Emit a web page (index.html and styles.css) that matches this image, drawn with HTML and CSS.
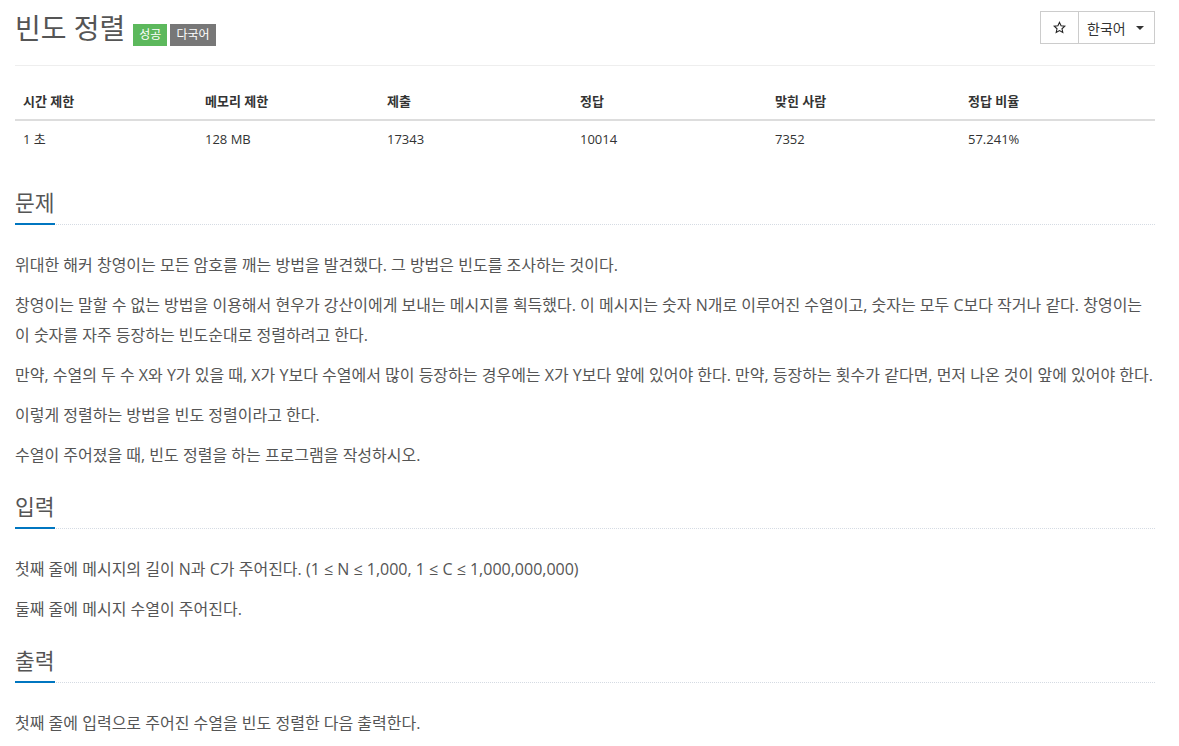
FILE: index.html
```html
<!DOCTYPE html>
<html lang="ko">
<head>
<meta charset="utf-8">
<title>빈도 정렬</title>
<link rel="stylesheet" href="styles.css">
</head>
<body>
<div class="container">
  <div class="page-header">
    <div class="title-wrap">
      <h1 class="title">빈도 정렬</h1>
      <span class="label label-ac">성공</span>
      <span class="label label-lang">다국어</span>
    </div>
    <div class="btn-group">
      <button class="btn btn-star" type="button">
        <svg width="13" height="13" viewBox="0 0 24 24" aria-hidden="true"><path d="M12 2.5l2.9 6.4 6.9.7-5.2 4.7 1.5 6.9L12 17.6l-6.1 3.6 1.5-6.9L2.2 9.6l6.9-.7z" fill="none" stroke="#222" stroke-width="2" stroke-linejoin="miter"/></svg>
      </button>
      <button class="btn btn-lang" type="button">한국어 <span class="caret"></span></button>
    </div>
  </div>

  <table class="info-table">
    <colgroup>
      <col class="c1"><col class="c2"><col class="c3"><col class="c4"><col class="c5"><col class="c6">
    </colgroup>
    <thead>
      <tr><th>시간 제한</th><th>메모리 제한</th><th>제출</th><th>정답</th><th>맞힌 사람</th><th>정답 비율</th></tr>
    </thead>
    <tbody>
      <tr><td>1 초</td><td>128 MB</td><td>17343</td><td>10014</td><td>7352</td><td>57.241%</td></tr>
    </tbody>
  </table>

  <section class="section first">
    <div class="headline"><h2>문제</h2></div>
    <div class="problem-text">
      <p>위대한 해커 창영이는 모든 암호를 깨는 방법을 발견했다. 그 방법은 빈도를 조사하는 것이다.</p>
      <p>창영이는 말할 수 없는 방법을 이용해서 현우가 강산이에게 보내는 메시지를 획득했다. 이 메시지는 숫자 N개로 이루어진 수열이고, 숫자는 모두 C보다 작거나 같다. 창영이는 이 숫자를 자주 등장하는 빈도순대로 정렬하려고 한다.</p>
      <p>만약, 수열의 두 수 X와 Y가 있을 때, X가 Y보다 수열에서 많이 등장하는 경우에는 X가 Y보다 앞에 있어야 한다. 만약, 등장하는 횟수가 같다면, 먼저 나온 것이 앞에 있어야 한다.</p>
      <p>이렇게 정렬하는 방법을 빈도 정렬이라고 한다.</p>
      <p>수열이 주어졌을 때, 빈도 정렬을 하는 프로그램을 작성하시오.</p>
    </div>
  </section>

  <section class="section">
    <div class="headline"><h2>입력</h2></div>
    <div class="problem-text">
      <p>첫째 줄에 메시지의 길이 N과 C가 주어진다. (1 ≤ N ≤ 1,000, 1 ≤ C ≤ 1,000,000,000)</p>
      <p>둘째 줄에 메시지 수열이 주어진다.</p>
    </div>
  </section>

  <section class="section">
    <div class="headline"><h2>출력</h2></div>
    <div class="problem-text">
      <p>첫째 줄에 입력으로 주어진 수열을 빈도 정렬한 다음 출력한다.</p>
    </div>
  </section>
</div>
</body>
</html>
```

FILE: styles.css
```css
html, body {
  margin: 0;
  padding: 0;
  background: #fff;
}
body {
  font-family: "Open Sans", "Noto Sans CJK KR", sans-serif;
  color: #333;
  font-size: 13px;
}
.container {
  width: 1140px;
  margin-left: 15px;
}

/* header */
.page-header {
  display: flex;
  justify-content: space-between;
  align-items: flex-start;
  padding-top: 10px;
  padding-bottom: 19px;
  border-bottom: 1px solid #eee;
}
.title-wrap {
  display: flex;
  align-items: baseline;
}
.title {
  margin: 0;
  font-size: 28px;
  line-height: 36px;
  font-weight: normal;
  color: #555;
}
.label {
  display: inline-block;
  font-size: 12px;
  line-height: 12px;
  padding: 5px 6px 5px;
  color: #fff;
  border-radius: 0;
}
.label-ac {
  background: #5cb85c;
  margin-left: 8px;
}
.label-lang {
  background: #777;
  margin-left: 3px;
}
.btn-group {
  display: flex;
  margin-top: 1px;
}
.btn {
  font-family: inherit;
  background: #fff;
  border: 1px solid #ccc;
  height: 33px;
  margin: 0;
  padding: 0;
  color: #333;
  display: flex;
  align-items: center;
  cursor: pointer;
}
.btn-star {
  width: 39px;
  justify-content: center;
}
.btn-lang {
  width: 76px;
  border-left: none;
  font-size: 14px;
  padding-left: 8px;
}
.caret {
  display: inline-block;
  width: 0;
  height: 0;
  margin-left: 10px;
  border-top: 4px solid #333;
  border-left: 4px solid transparent;
  border-right: 4px solid transparent;
}

/* info table */
.info-table {
  width: 100%;
  border-collapse: collapse;
  margin-top: 17px;
  margin-bottom: 31px;
  table-layout: fixed;
}
.c1 { width: 182px; }
.c2 { width: 182px; }
.c3 { width: 193px; }
.c4 { width: 195px; }
.c5 { width: 193px; }
.c6 { width: 195px; }
.info-table th,
.info-table td {
  text-align: left;
  padding: 8px;
  line-height: 20px;
  color: #333;
}
.info-table th {
  font-size: 13px;
  font-weight: bold;
  border-bottom: 2px solid #ddd;
}
.info-table td {
  font-size: 13px;
}

/* sections */
.section {
  margin-top: 22px;
}
.section.first {
  margin-top: 0;
}
.headline {
  border-bottom: 1px dotted #d5dbe3;
  margin-bottom: 25px;
}
.headline h2 {
  display: inline-block;
  margin: 0 0 -1px;
  font-size: 21.5px;
  line-height: 30px;
  font-weight: normal;
  color: #555;
  padding-bottom: 5px;
  border-bottom: 2px solid #0076c0;
}
.problem-text {
  font-size: 16px;
  line-height: 30px;
  color: #555;
}
.problem-text p {
  margin: 0 0 10px;
}
```
